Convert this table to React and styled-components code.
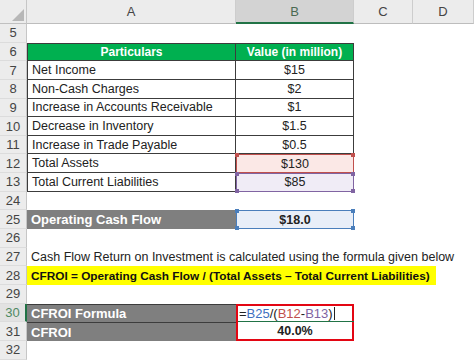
import React from 'react';
import styled, { createGlobalStyle, css } from 'styled-components';

const GlobalStyle = createGlobalStyle`
  html, body {
    margin: 0;
    padding: 0;
    background: #fff;
  }
  body {
    font-family: "Liberation Sans", Arial, sans-serif;
  }
`;

const COLS = '27px 209px 118px 59px 1fr';

const Sheet = styled.div`
  width: 474px;
  height: 361px;
  overflow: hidden;
  background: #fff;
  color: #222;
  font-size: 12.5px;
`;

const HeaderRow = styled.div`
  display: grid;
  grid-template-columns: ${COLS};
  height: 24px;
  background: #ececec;
`;

const Corner = styled.div`
  position: relative;
  border-right: 1px solid #c6c6c6;
  border-bottom: 1px solid #c0c0c0;
  &::after {
    content: '';
    position: absolute;
    right: 2px;
    bottom: 2px;
    width: 0;
    height: 0;
    border-left: 12px solid transparent;
    border-bottom: 12px solid #b7b7b7;
  }
`;

const ColHead = styled.div`
  display: flex;
  align-items: center;
  justify-content: center;
  font-size: 13px;
  color: #444;
  border-right: 1px solid #cdcdcd;
  border-bottom: 1px solid #bdbdbd;
  ${(p) =>
    p.$selected &&
    css`
      background: #d3d3d3;
      color: #4a6a52;
      border-bottom: 2px solid #217346;
    `}
`;

const Row = styled.div`
  display: grid;
  grid-template-columns: ${COLS};
  height: 18.65px;
`;

const RowNum = styled.div`
  display: flex;
  align-items: center;
  justify-content: center;
  background: #ececec;
  color: #444;
  font-size: 13px;
  border-right: 1px solid #c6c6c6;
  border-bottom: 1px solid #dcdcdc;
  box-sizing: border-box;
  ${(p) =>
    p.$active &&
    css`
      color: #4f8a62;
      background: #e2e2e2;
      border-right: 2px solid #217346;
    `}
`;

const Cell = styled.div`
  position: relative;
  display: flex;
  align-items: center;
  justify-content: ${(p) => p.$align || 'flex-start'};
  padding: 0 4px;
  box-sizing: border-box;
  white-space: nowrap;
  font-size: ${(p) => p.$size || '12.5px'};
  font-weight: ${(p) => (p.$bold ? 700 : 400)};
  background: ${(p) => p.$fill || 'transparent'};
  color: ${(p) => p.$color || '#222'};
  ${(p) => p.$span && css`grid-column: ${p.$span};`}
  ${(p) =>
    p.$grid &&
    css`
      border-right: 1px solid #3c3c3c;
      border-bottom: 1px solid #3c3c3c;
    `}
  ${(p) => p.$left && css`border-left: 1px solid #3c3c3c;`}
  ${(p) => p.$top && css`border-top: 1px solid #3c3c3c;`}
`;

const GrayLabel = styled(Cell)`
  background: #7f7f7f;
  color: #fff;
  font-weight: 700;
  font-size: 13px;
  padding-left: 4px;
`;

const RefCell = styled(Cell)`
  justify-content: center;
  border: 1px solid ${(p) => p.$ref};
`;

const Handle = styled.span`
  position: absolute;
  width: 4px;
  height: 4px;
  background: ${(p) => p.$c};
  ${(p) => (p.$v === 'top' ? 'top: -2px;' : 'bottom: -2px;')}
  ${(p) => (p.$h === 'left' ? 'left: -2px;' : 'right: -2px;')}
`;

const BoxCell = styled(Cell)`
  border-left: 2px solid #e30613;
  border-right: 2px solid #e30613;
  ${(p) => (p.$first ? 'border-top: 2px solid #e30613;' : 'border-bottom: 2px solid #e30613;')}
`;

const EditLine = styled.span`
  position: absolute;
  left: 0;
  right: -2px;
  bottom: 0;
  height: 1px;
  background: #217346;
`;

const Highlight = styled.span`
  display: inline-flex;
  align-items: center;
  height: 100%;
  width: 409px;
  padding-left: 4px;
  box-sizing: border-box;
  background: #ffff00;
  font-weight: 700;
  font-size: 11.8px;
  color: #111;
`;

const Ref = styled.span`
  color: ${(p) => p.$c};
`;

const Caret = styled.span`
  display: inline-block;
  width: 1px;
  height: 13px;
  margin-left: 1px;
  background: #222;
`;

const Handles = ({ c, bottom = true }) => (
  <>
    <Handle $c={c} $v="top" $h="left" />
    <Handle $c={c} $v="top" $h="right" />
    {bottom && <Handle $c={c} $v="bottom" $h="left" />}
    {bottom && <Handle $c={c} $v="bottom" $h="right" />}
  </>
);

const GREEN = '#00b050';

const tableRows = [
  ['7', 'Net Income', '$15'],
  ['8', 'Non-Cash Charges', '$2'],
  ['9', 'Increase in Accounts Receivable', '$1'],
  ['10', 'Decrease in Inventory', '$1.5'],
  ['11', 'Increase in Trade Payable', '$0.5'],
];

const Empty = ({ n }) => (
  <Row>
    <RowNum>{n}</RowNum>
  </Row>
);

export default function App() {
  return (
    <Sheet>
      <GlobalStyle />
      <HeaderRow>
        <Corner />
        <ColHead>A</ColHead>
        <ColHead $selected>B</ColHead>
        <ColHead>C</ColHead>
        <ColHead>D</ColHead>
      </HeaderRow>

      <Empty n="5" />
      <Row>
        <RowNum>6</RowNum>
        <Cell $fill={GREEN} $color="#fff" $bold $size="12px" $align="center" $grid $left $top>
          Particulars
        </Cell>
        <Cell $fill={GREEN} $color="#fff" $bold $size="12px" $align="center" $grid $top>
          Value (in million)
        </Cell>
      </Row>
      {tableRows.map(([n, label, value]) => (
        <Row key={n}>
          <RowNum>{n}</RowNum>
          <Cell $grid $left>{label}</Cell>
          <Cell $grid $align="center">{value}</Cell>
        </Row>
      ))}
      <Row>
        <RowNum>12</RowNum>
        <Cell $grid $left>Total Assets</Cell>
        <RefCell $ref="#c0504d" $fill="#fbe8e6">
          $130
          <Handles c="#c0504d" bottom={false} />
        </RefCell>
      </Row>
      <Row>
        <RowNum>13</RowNum>
        <Cell $grid $left>Total Current Liabilities</Cell>
        <RefCell $ref="#8064a2" $fill="#f0ecf6">
          $85
          <Handles c="#8064a2" />
        </RefCell>
      </Row>
      <Empty n="24" />
      <Row>
        <RowNum>25</RowNum>
        <GrayLabel>Operating Cash Flow</GrayLabel>
        <RefCell $ref="#4a7ebb" $fill="#e8eef8" $bold>
          $18.0
          <Handles c="#4a7ebb" />
        </RefCell>
      </Row>
      <Empty n="26" />
      <Row>
        <RowNum>27</RowNum>
        <Cell $span="2 / -1">
          Cash Flow Return on Investment is calculated using the formula given below
        </Cell>
      </Row>
      <Row>
        <RowNum>28</RowNum>
        <Cell $span="2 / -1" style={{ padding: 0 }}>
          <Highlight>
            CFROI = Operating Cash Flow / (Total Assets – Total Current Liabilities)
          </Highlight>
        </Cell>
      </Row>
      <Empty n="29" />
      <Row>
        <RowNum $active>30</RowNum>
        <GrayLabel $top>CFROI Formula</GrayLabel>
        <BoxCell $first $size="13px" style={{ paddingLeft: 1 }}>
          =<Ref $c="#3d6fc0">B25</Ref>/(<Ref $c="#c0504d">B12</Ref>-
          <Ref $c="#8064a2">B13</Ref>)<Caret />
          <EditLine />
        </BoxCell>
      </Row>
      <Row>
        <RowNum>31</RowNum>
        <GrayLabel $top>CFROI</GrayLabel>
        <BoxCell $align="center" $bold>40.0%</BoxCell>
      </Row>
      <Empty n="32" />
    </Sheet>
  );
}
